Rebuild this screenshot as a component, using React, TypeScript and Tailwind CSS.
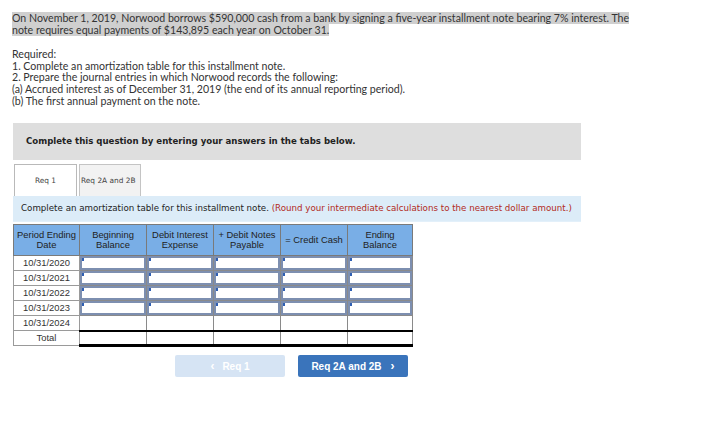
import React from 'react';

const rows = ['10/31/2020', '10/31/2021', '10/31/2022', '10/31/2023', '10/31/2024'];

const headers = [
  ['Period Ending', 'Date'],
  ['Beginning', 'Balance'],
  ['Debit Interest', 'Expense'],
  ['+ Debit Notes', 'Payable'],
  ['= Credit Cash'],
  ['Ending', 'Balance'],
];

const widths = ['w-[66px]', 'w-[67px]', 'w-[67px]', 'w-[67px]', 'w-[67px]', 'w-[65px]'];

function InputCell() {
  return (
    <td className="p-0 h-[14px] border border-[#8a8a8a]">
      <div className="relative h-[14px] border-2 border-[#7d8fb0] bg-white">
        <span className="absolute left-0 top-0 w-[2px] h-[3px] bg-[#2f5fb3]" />
      </div>
    </td>
  );
}

export default function App() {
  return (
    <div className="w-[708px] h-[428px] bg-white text-[#333] relative">
      <div className="pt-[13px] pl-[12px] pr-[60px] font-['Lato',sans-serif] text-[10.6px] leading-[11.6px]">
        <p>
          <span className="bg-[#cfcfcf]">
            On November 1, 2019, Norwood borrows $590,000 cash from a bank by signing a five-year installment note bearing 7% interest. The note requires equal payments of $143,895 each year on October 31.
          </span>
        </p>
        <p className="mt-[13px]">Required:</p>
        <p>1. Complete an amortization table for this installment note.</p>
        <p>2. Prepare the journal entries in which Norwood records the following:</p>
        <p>(a) Accrued interest as of December 31, 2019 (the end of its annual reporting period).</p>
        <p>(b) The first annual payment on the note.</p>
      </div>

      <div className="ml-[13px] mt-[16px] w-[568px] h-[37px] bg-[#dedede] flex items-center pl-[13px] font-['DejaVu_Sans',sans-serif] font-bold text-[8.6px] text-[#222]">
        Complete this question by entering your answers in the tabs below.
      </div>

      <div className="ml-[14px] mt-[4px] flex gap-[2px] font-['DejaVu_Sans',sans-serif] text-[7.4px] text-[#444]">
        <div className="w-[63px] h-[32px] bg-white border border-b-0 border-[#b9b9b9] flex items-center justify-center">Req 1</div>
        <div className="w-[62px] h-[32px] bg-[#f2f2f2] border border-b-0 border-[#c4c4c4] flex items-center pl-[1px]">Req 2A and 2B</div>
      </div>

      <div className="ml-[13px] w-[568px] h-[25px] bg-[#dcecf8] flex items-center pl-[8px] font-['DejaVu_Sans',sans-serif] text-[8.7px] text-[#222] whitespace-nowrap">
        Complete an amortization table for this installment note.&nbsp;
        <span className="text-[#b22a22]">(Round your intermediate calculations to the nearest dollar amount.)</span>
      </div>
      <div className="ml-[13px] w-[568px] h-px bg-[#e3f0fa]" />

      <table className="ml-[13px] mt-[2px] border-collapse font-['Liberation_Sans',sans-serif] text-[9.4px] text-[#333] table-fixed">
        <thead>
          <tr>
            {headers.map((h, i) => (
              <th key={i} className={`${widths[i]} h-[31px] p-0 bg-[#79aee6] border border-[#7a7a7a] font-normal leading-[10px] text-center text-[#222]`}>
                {h.map((line) => (
                  <div key={line}>{line}</div>
                ))}
              </th>
            ))}
          </tr>
        </thead>
        <tbody>
          {rows.slice(0, 4).map((d) => (
            <tr key={d}>
              <td className="h-[14px] p-0 text-center border border-[#9a9a9a] leading-[14px]">{d}</td>
              <InputCell />
              <InputCell />
              <InputCell />
              <InputCell />
              <InputCell />
            </tr>
          ))}
          <tr>
            <td className="h-[14px] p-0 text-center border border-[#9a9a9a] leading-[14px]">{rows[4]}</td>
            {[0, 1, 2, 3, 4].map((i) => (
              <td key={i} className="h-[14px] p-0 border border-[#8a8a8a] border-b-2 border-b-black" />
            ))}
          </tr>
          <tr>
            <td className="h-[14px] p-0 text-center border border-[#9a9a9a] leading-[14px]">Total</td>
            {[0, 1, 2, 3, 4].map((i) => (
              <td key={i} className="h-[14px] p-0 border border-[#8a8a8a] border-t-2 border-t-black border-b-[3px] border-b-black" />
            ))}
          </tr>
        </tbody>
      </table>

      <div className="mt-[8px] ml-[175px] flex gap-[13px] font-['Liberation_Sans',sans-serif] font-bold text-[10px]">
        <div className="w-[110px] h-[22px] rounded-[2px] bg-[#d6e4f4] text-white flex items-center justify-center gap-[8px]">
          <span className="text-[12px]">&lsaquo;</span>
          <span>Req 1</span>
        </div>
        <div className="w-[110px] h-[22px] rounded-[2px] bg-[#3a74bb] text-white flex items-center justify-center gap-[9px]">
          <span>Req 2A and 2B</span>
          <span className="text-[12px]">&rsaquo;</span>
        </div>
      </div>
    </div>
  );
}
